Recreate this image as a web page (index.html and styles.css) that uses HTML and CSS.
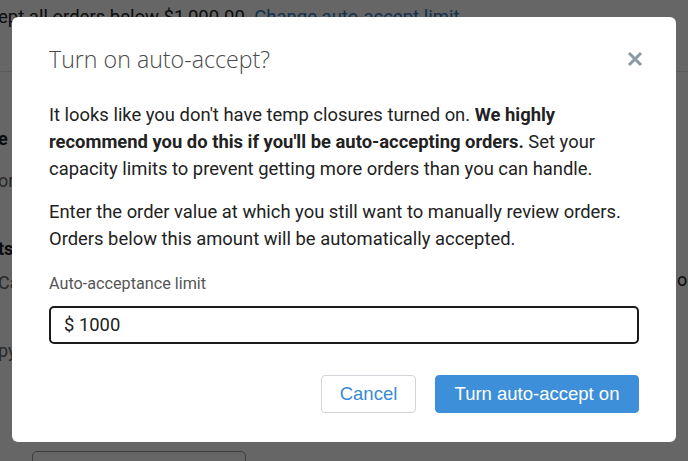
FILE: index.html
```html
<!DOCTYPE html>
<html>
<head>
<meta charset="utf-8">
<link rel="stylesheet" href="styles.css">
</head>
<body>
<div class="page">
  <div class="topbar">
    <span class="top-text">ept all orders below $1,000.00.</span> <span class="top-link">Change auto-accept limit</span>
  </div>
  <div class="side">
    <div class="frag bold f1">e</div>
    <div class="frag light f2">ore</div>
    <div class="frag bold f3">ts</div>
    <div class="frag light f4">Ca</div>
    <div class="frag light f5">py</div>
  </div>
  <div class="right-frag">or</div>
  <div class="bottom-btn"></div>
</div>
<div class="overlay"></div>
<div class="modal">
  <div class="modal-head">
    <h2 class="modal-title">Turn on auto-accept?</h2>
    <svg class="close" width="16" height="16" viewBox="0 0 16 16"><path d="M2 2 L14 14 M14 2 L2 14" stroke="#8a99a6" stroke-width="3" stroke-linecap="butt"/></svg>
  </div>
  <p class="para">It looks like you don't have temp closures turned on. <b>We highly recommend you do this if you'll be auto-accepting orders.</b> Set your capacity limits to prevent getting more orders than you can handle.</p>
  <p class="para">Enter the order value at which you still want to manually review orders. Orders below this amount will be automatically accepted.</p>
  <label class="label">Auto-acceptance limit</label>
  <div class="input">$ 1000</div>
  <div class="actions">
    <button class="btn btn-cancel">Cancel</button>
    <button class="btn btn-primary">Turn auto-accept on</button>
  </div>
</div>
</body>
</html>
```
FILE: styles.css
```css
html, body { margin: 0; padding: 0; overflow: hidden; }
body {
  width: 688px;
  height: 461px;
  position: relative;
  background: #fff;
  font-family: Roboto, "Liberation Sans", sans-serif;
}
.page { position: relative; height: 461px; overflow: hidden; }
.topbar {
  height: 72px;
  border-bottom: 1px solid #e0e0e0;
  font-size: 18.5px;
  line-height: 22px;
  padding-top: 6px;
  box-sizing: border-box;
  margin-left: -2px;
  white-space: nowrap;
  color: #222;
}
.top-link { color: #2f7cc4; }
.side { padding-top: 56px; margin-left: -2px; }
.frag { font-size: 18px; line-height: 22px; color: #222; }
.bold { font-weight: 700; }
.light { color: #666; }
.f1 { margin-bottom: 20px; }
.f2 { margin-bottom: 46px; }
.f3 { margin-bottom: 12px; }
.f4 { margin-bottom: 46px; }
.right-frag { position: absolute; left: 677px; top: 269px; font-size: 18px; color: #222; }
.bottom-btn {
  position: absolute; left: 32px; top: 451px; width: 212px; height: 40px;
  border: 1px solid #999; border-radius: 5px; background: #fff;
}
.overlay { position: absolute; inset: 0; background: rgba(0,0,0,0.6); }
.modal {
  position: absolute;
  left: 12px; top: 17px;
  width: 664px; height: 425px;
  box-sizing: border-box;
  background: #fff;
  border-radius: 6px;
  padding: 0 37px;
}
.modal-head {
  display: flex; align-items: center; justify-content: space-between;
  height: 84px;
}
.modal-title {
  margin: 0; font-family: "Open Sans", sans-serif; font-weight: 300;
  font-size: 23.2px; color: #4a4a4a;
}
.close { margin-right: -4px; }
.para {
  margin: 0 0 16px; font-size: 18.4px; line-height: 27px; color: #222;
}
.para b { font-weight: 700; }
.label { display: block; font-size: 16.2px; color: #555; margin-top: 22px; line-height: 20px; }
.input {
  margin-top: 12px;
  height: 38px; box-sizing: border-box;
  border: 2px solid #1a1a1a; border-radius: 5px;
  font-size: 18.4px; line-height: 34px; padding-left: 13px; color: #222;
}
.actions { display: flex; justify-content: flex-end; gap: 19px; margin-top: 31px; }
.btn {
  height: 38px; border-radius: 4px; font-family: "Liberation Sans", Arial, sans-serif;
  font-size: 18.5px; cursor: pointer; padding: 0;
}
.btn-cancel { width: 95px; background: #fff; border: 1px solid #d0d5d9; color: #3a8ad6; }
.btn-primary { width: 204px; background: #3d8fd9; border: 1px solid #3d8fd9; color: #fff; }
```
